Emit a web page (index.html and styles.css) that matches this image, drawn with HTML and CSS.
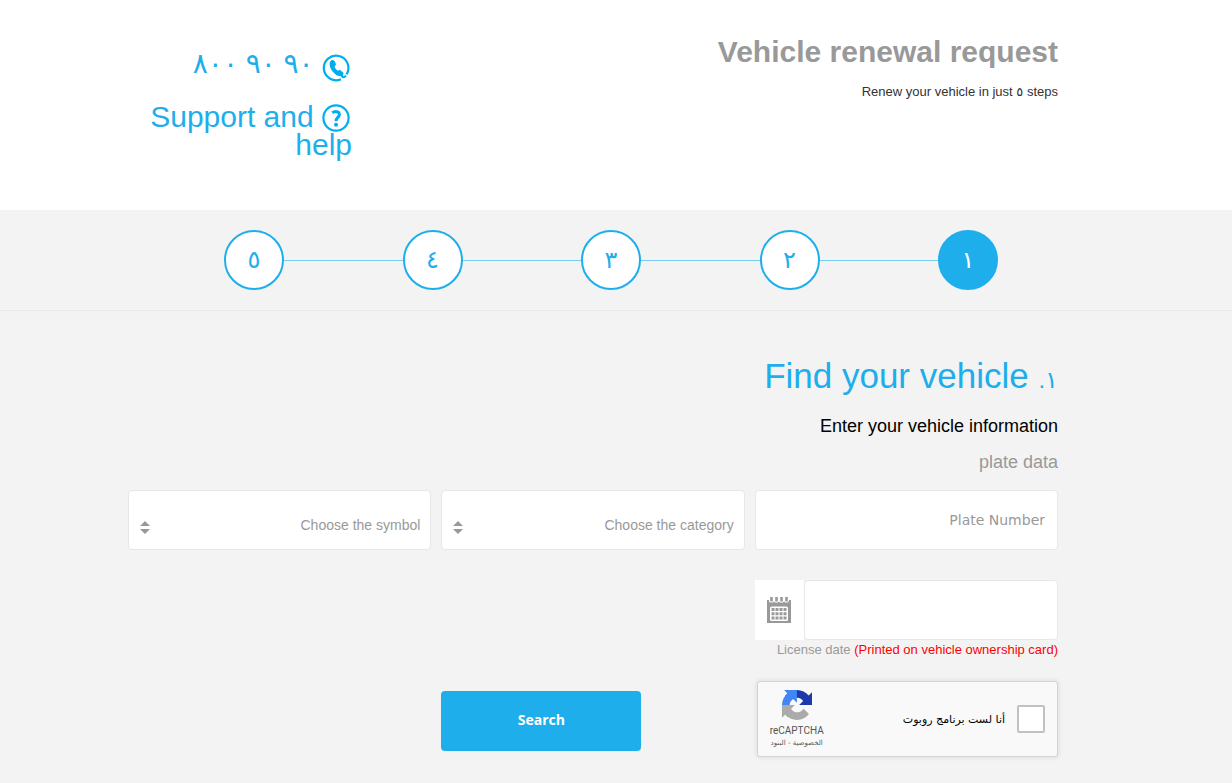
FILE: index.html
```html
<!DOCTYPE html>
<html lang="ar" dir="rtl">
<head>
    <meta charset="UTF-8">
    <meta name="viewport" content="width=device-width, initial-scale=1.0">
    <title>Vehicle renewal request</title>
    <link rel="stylesheet" href="styles.css">
</head>
<body>
    <header class="page-header">
        <div class="intro">
            <h1>Vehicle renewal request</h1>
            <p dir="ltr">Renew your vehicle in just <bdi>٥</bdi> steps</p>
        </div>
        <div class="contact">
            <a class="phone" href="#">
                <svg class="icon" viewBox="0 0 28 28" aria-hidden="true">
                    <path d="M19 25.200A12.300 12.300 0 1 1 24.500 20.500" fill="none" stroke="#00aeef" stroke-width="2.200"/>
                    <path d="M8.300 7.200C9.300 5.700 11.500 5.700 12.600 7L13.800 9.700C14.200 11 13.300 11.800 12.500 12.500C13 14.200 14.200 15.700 15.700 16.700C16.700 16 17.600 15.700 18.600 16.400L21 18.300C22 19.500 21.400 21.200 19.900 21.900C16.800 23 13.300 20.700 11 18C8.400 15 6.600 10.200 8.300 7.200Z" fill="#00aeef"/>
                    <path d="M19.500 20.500C20 23.500 21.500 24.200 24 21.800" fill="none" stroke="#00aeef" stroke-width="2.200"/>
                </svg>
                <span dir="ltr"><bdi>٨٠٠</bdi> <bdi>٩٠</bdi> <bdi>٩٠</bdi></span>
            </a>
            <a class="support" href="#">
                <svg class="icon" viewBox="0 0 28 28" aria-hidden="true">
                    <circle cx="14" cy="14" r="12.600" fill="none" stroke="#00aeef" stroke-width="2.200"/>
                    <path d="M10.300 8.800C12.600 7 17.400 7 17.400 10.500C17.400 13.500 14 13.400 14 17.200" fill="none" stroke="#00aeef" stroke-width="3"/>
                    <circle cx="14" cy="20.800" r="2" fill="#00aeef"/>
                </svg>
                Support and help
            </a>
        </div>
    </header>

    <nav class="steps-bar">
        <ol class="steps">
            <li><span class="step active">١</span></li>
            <li><span class="step">٢</span></li>
            <li><span class="step">٣</span></li>
            <li><span class="step">٤</span></li>
            <li><span class="step">٥</span></li>
        </ol>
    </nav>

    <main class="content">
        <h2><span class="num">١.</span> Find your vehicle</h2>
        <h3>Enter your vehicle information</h3>
        <h4>plate data</h4>

        <form>
            <div class="form-grid">
                <input class="field" type="text" placeholder="Plate Number" aria-label="Plate Number">
                <div class="select-wrap">
                    <select class="field" aria-label="Category">
                        <option>Choose the category</option>
                    </select>
                    <svg class="arrows" viewBox="0 0 10 14" aria-hidden="true"><path d="M0 5L5 0L10 5ZM0 8H10L5 13Z" fill="#999"/></svg>
                </div>
                <div class="select-wrap">
                    <select class="field" aria-label="Symbol">
                        <option>Choose the symbol</option>
                    </select>
                    <svg class="arrows" viewBox="0 0 10 14" aria-hidden="true"><path d="M0 5L5 0L10 5ZM0 8H10L5 13Z" fill="#999"/></svg>
                </div>
            </div>

            <div class="form-grid date-row">
                <div>
                    <div class="date-group">
                        <input class="field" type="text" id="licenseDate">
                        <button class="calendar" type="button" aria-label="Open calendar">
                            <svg viewBox="0 0 24 26" aria-hidden="true">
                                <path d="M0 3H24V26H0Z" fill="#999"/>
                                <path d="M2 0H22V4Q21 6 19.500 5.500Q18 6 17 4.500Q16 6 14.500 5.500Q13 6 12 4.500Q11 6 9.500 5.500Q8 6 7 4.500Q6 6 4.500 5.500Q2 6 2 4Z" fill="#fff"/>
                                <path d="M4.500 0V4.500M9.500 0V4.500M14.500 0V4.500M19.500 0V4.500" stroke="#999" stroke-width="2.600"/>
                                <rect x="3" y="9.500" width="18" height="14.500" rx="1.500" fill="#fff"/>
                                <path d="M4.500 12.500H20M4.500 16.700H20M4.500 21H20" stroke="#999" stroke-width="3" stroke-dasharray="3 1"/>
                            </svg>
                        </button>
                    </div>
                    <label class="hint" for="licenseDate" dir="ltr">License date <span>(Printed on vehicle ownership card)</span></label>
                </div>
            </div>

            <div class="form-grid submit-row">
                <div class="captcha">
                    <input type="checkbox" id="robot">
                    <label for="robot">أنا لست برنامج روبوت</label>
                    <div class="captcha-brand">
                        <svg viewBox="0 0 64 64" aria-hidden="true">
                            <path d="M64 31.955l-.033-1.370V4.687l-7.160 7.160C50.948 4.674 42.033.093 32.050.093c-10.400 0-19.622 4.960-25.458 12.640l11.736 11.860a15.550 15.550 0 0 1 4.754-5.334c2.050-1.600 4.952-2.906 8.968-2.906.485 0 .860.057 1.135.163 4.976.393 9.288 3.140 11.828 7.124l-8.307 8.307L64 31.953" fill="#1c3aa9"/>
                            <path d="M31.862.094l-1.370.033H4.594l7.160 7.160C4.580 13.147 0 22.060 0 32.046c0 10.400 4.960 19.622 12.640 25.458L24.500 45.768a15.550 15.550 0 0 1-5.334-4.754c-1.600-2.050-2.906-4.952-2.906-8.968 0-.485.057-.860.163-1.135.393-4.976 3.140-9.288 7.124-11.828l8.307 8.307L31.860.095" fill="#4285f4"/>
                            <path d="M.001 32.045l.033 1.370v25.898l7.160-7.160c5.860 7.173 14.774 11.754 24.760 11.754 10.400 0 19.622-4.960 25.458-12.640l-11.736-11.860a15.550 15.550 0 0 1-4.754 5.334c-2.050 1.600-4.952 2.906-8.968 2.906-.485 0-.860-.057-1.135-.163-4.976-.393-9.288-3.140-11.828-7.124l8.307-8.307c-10.522.040-22.400.066-27.295-.005" fill="#ababab"/>
                        </svg>
                        <span class="brand-name">reCAPTCHA</span>
                        <span class="brand-links"><a href="#">الخصوصية</a> - <a href="#">البنود</a></span>
                    </div>
                </div>
                <button class="btn" type="submit">Search</button>
            </div>
        </form>
    </main>
</body>
</html>
```
FILE: styles.css
```css
* {
    box-sizing: border-box;
}
body {
    margin: 0;
    background-color: #f3f3f3;
    color: #333;
    font-family: "Liberation Sans", Arial, "DejaVu Sans", sans-serif;
}
h1, h2, h3, h4, p {
    margin: 0;
    font-weight: normal;
}
a {
    color: inherit;
    text-decoration: none;
}

/* header */
.page-header {
    display: flex;
    justify-content: space-between;
    align-items: flex-start;
    min-height: 210px;
    padding: 34px 174px 0 128px;
    background: white;
}
.intro h1 {
    color: #999;
    font-size: 30px;
    font-weight: bold;
    line-height: 36px;
}
.intro p {
    margin-top: 12px;
    font-size: 13px;
    line-height: 20px;
    text-align: right;
}
.contact {
    width: 224px;
    padding-top: 10px;
    color: #1eaeec;
    font-size: 30px;
    line-height: 28px;
}
.contact a {
    display: block;
}
.contact .icon {
    width: 28px;
    height: 28px;
    margin: 0 2px -4px 0;
    vertical-align: -1px;
}
.phone {
    margin-bottom: 20px;
    line-height: 38px;
}
.contact .phone .icon {
    vertical-align: -5px;
}
.phone span {
    font-size: 28px;
}

/* steps */
.steps-bar {
    height: 101px;
    padding: 20px 234px 0 224px;
    border-bottom: 1px solid #e7e7e7;
}
.steps {
    display: flex;
    margin: 0;
    padding: 0;
    list-style: none;
}
.steps li {
    display: flex;
    flex: 1 1 60px;
    align-items: center;
}
.steps li:first-child {
    flex: 0 0 60px;
}
.steps li + li::before {
    content: "";
    flex: 1;
    height: 1px;
    background: #7accf0;
}
.step {
    width: 60px;
    height: 60px;
    border: 2px solid #1eaeec;
    border-radius: 50%;
    background: white;
    color: #1eaeec;
    font-size: 24px;
    line-height: 56px;
    text-align: center;
}
.step.active {
    background: #1eaeec;
    color: white;
}

/* form */
.content {
    padding: 42px 174px 27px 128px;
}
.content h2 {
    color: #1eaeec;
    font-size: 35px;
    line-height: 46px;
}
.content h2 .num {
    font-size: 24px;
}
.content h3 {
    margin-top: 11px;
    color: #000;
    font-size: 18px;
    line-height: 24px;
}
.content h4 {
    margin-top: 12px;
    color: #999;
    font-size: 18px;
    line-height: 24px;
}
.form-grid {
    display: grid;
    grid-template-columns: repeat(3, 1fr);
    gap: 10px;
    margin-top: 16px;
}
.field {
    display: block;
    width: 100%;
    height: 60px;
    padding: 0 12px;
    border: 1px solid #e7e7e7;
    border-radius: 4px;
    background: white;
    color: #999;
    font-family: "DejaVu Sans", sans-serif;
    font-size: 14px;
}
.field::placeholder {
    color: #999;
    opacity: 1;
}
.select-wrap {
    position: relative;
}
.select-wrap .field {
    padding: 10px 10px 0;
    appearance: none;
    font-family: "Liberation Sans", Arial, sans-serif;
}
.arrows {
    position: absolute;
    top: 31px;
    left: 12px;
    width: 10px;
    height: 14px;
    pointer-events: none;
}
.date-row {
    margin-top: 30px;
}
.date-group {
    display: flex;
}
.date-group .field {
    flex: 1;
    min-width: 0;
}
.calendar {
    width: 49px;
    height: 60px;
    padding: 0;
    border: none;
    background: white;
}
.calendar svg {
    display: block;
    width: 24px;
    height: 26px;
    margin: 0 auto;
}
.hint {
    display: block;
    color: #999;
    font-size: 13px;
    line-height: 20px;
    text-align: right;
    white-space: nowrap;
}
.hint span {
    color: #f00;
}
.submit-row {
    margin-top: 21px;
}
.captcha {
    display: flex;
    align-items: center;
    height: 76px;
    margin-left: 2px;
    padding: 0 12px 0 10px;
    border: 1px solid #d3d3d3;
    border-radius: 3px;
    background: #f9f9f9;
    box-shadow: 0 0 4px 1px rgba(0,0,0,0.08);
}
.captcha input {
    width: 28px;
    height: 28px;
    margin: 0;
    border: 2px solid #c1c1c1;
    border-radius: 2px;
    background: white;
    appearance: none;
}
.captcha label {
    margin-right: 12px;
    color: #000;
    font-family: "DejaVu Sans", sans-serif;
    font-size: 11px;
}
.captcha-brand {
    display: flex;
    flex-direction: column;
    align-items: center;
    width: 58px;
    margin-right: auto;
    color: #555;
}
.captcha-brand svg {
    width: 30px;
    height: 30px;
}
.brand-name {
    margin-top: 4px;
    font-family: Roboto, sans-serif;
    font-size: 10px;
    line-height: 14px;
}
.brand-links {
    font-family: "DejaVu Sans", sans-serif;
    font-size: 7px;
    line-height: 10px;
    white-space: nowrap;
}
.btn {
    width: 200px;
    height: 60px;
    margin: 10px 0 0;
    padding: 0 0 4px;
    justify-self: end;
    border: none;
    border-radius: 4px;
    background-color: #1eaeec;
    color: white;
    font-family: "Open Sans", sans-serif;
    font-size: 14px;
    font-weight: bold;
}
```
